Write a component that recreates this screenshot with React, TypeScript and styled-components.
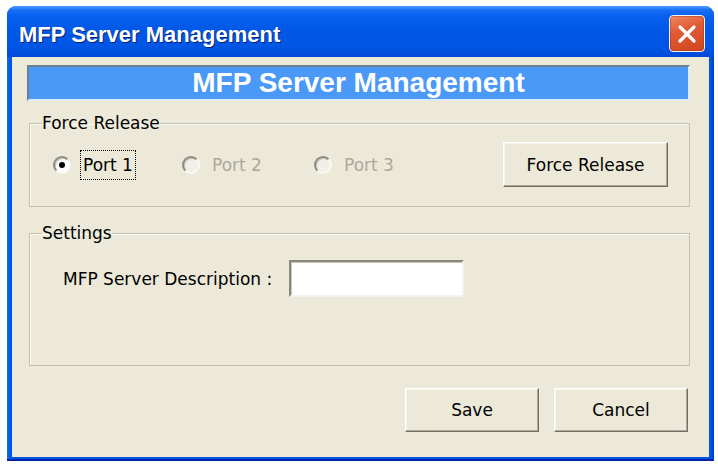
import React from "react";
import styled, { createGlobalStyle } from "styled-components";

const GlobalStyle = createGlobalStyle`
  html, body { margin: 0; padding: 0; background: #ffffff; }
  body { font-family: "DejaVu Sans", "Liberation Sans", sans-serif; }
  * { box-sizing: border-box; }
`;

const Window = styled.div`
  margin: 6px 0 0 7px;
  width: 707px;
  height: 455px;
  display: flex;
  flex-direction: column;
  border-radius: 9px 9px 0 0;
  overflow: hidden;
  background: linear-gradient(90deg, #1a6cf0 0px, #0055e5 3px, #0055e5 calc(100% - 3px), #0038c8 100%);
  box-shadow: inset 0 -2px 0 #0024a8;
`;

const TitleBar = styled.div`
  flex: none;
  height: 51px;
  display: flex;
  align-items: center;
  padding: 4px 9px 0 12px;
  background: linear-gradient(
    180deg,
    #4aa0ff 0px,
    #1a6ef5 4px,
    #0760ee 10px,
    #0058e6 24px,
    #0055e4 42px,
    #0049d8 51px
  );
`;

const TitleText = styled.div`
  flex: 1;
  margin-top: 3px;
  font-family: "Liberation Sans", Arial, sans-serif;
  font-weight: bold;
  font-size: 22px;
  color: #ffffff;
  text-shadow: 1px 1px 0 #0a2070;
  white-space: nowrap;
`;

const CloseButton = styled.div`
  width: 36px;
  height: 37px;
  border: 1px solid #f4f4f4;
  border-radius: 4px;
  background: linear-gradient(160deg, #ef8a66 0%, #e05a34 40%, #cf4520 100%);
  box-shadow: inset 0 0 0 1px rgba(150, 40, 10, 0.35);
  display: flex;
  align-items: center;
  justify-content: center;
`;

const Client = styled.div`
  flex: 1;
  margin: 0 5px 4px 5px;
  background: #ece9d8;
  padding: 8px 19px 0 15px;
  display: flex;
  flex-direction: column;
`;

const HeaderBar = styled.div`
  height: 36px;
  background: #4a99f7;
  border: 2px solid;
  border-color: #6f7f96 #dfe9f7 #dfe9f7 #6f7f96;
  display: flex;
  align-items: center;
  justify-content: center;
  font-family: "Liberation Sans", Arial, sans-serif;
  font-weight: bold;
  font-size: 28px;
  color: #ffffff;
  white-space: nowrap;
`;

const Group = styled.fieldset<{ $gap: number }>`
  margin: ${(p) => p.$gap}px 0 0 2px;
  padding: 0;
  min-width: 0;
  border: 1px solid #c3c0b0;
  box-shadow: inset 1px 1px 0 #fbfaf4;
`;

const Legend = styled.legend`
  margin-left: 12px;
  padding: 0;
  font-size: 17px;
  line-height: 20px;
  color: #000000;
`;

const ReleaseRow = styled.div`
  display: flex;
  align-items: center;
  padding: 9px 21px 19px 23px;
`;

const RadioItem = styled.div<{ $width?: number }>`
  display: flex;
  align-items: center;
  width: ${(p) => (p.$width ? `${p.$width}px` : "auto")};
  gap: 9px;
`;

const RadioCircle = styled.span<{ $checked?: boolean; $disabled?: boolean }>`
  flex: none;
  width: 18px;
  height: 18px;
  border-radius: 50%;
  border: 2px solid;
  border-color: #8d8b80 #f8f8f4 #f8f8f4 #8d8b80;
  box-shadow: inset 1px 1px 0 #c9c6b8;
  background: ${(p) => (p.$disabled ? "#f1f0e8" : "#ffffff")};
  display: flex;
  align-items: center;
  justify-content: center;
  &::after {
    content: "";
    display: ${(p) => (p.$checked ? "block" : "none")};
    width: 6px;
    height: 6px;
    border-radius: 50%;
    background: #000000;
  }
`;

const RadioLabel = styled.span<{ $disabled?: boolean; $focused?: boolean }>`
  font-size: 17px;
  line-height: 20px;
  padding: 4px 2px;
  border: 1px dotted ${(p) => (p.$focused ? "#000000" : "transparent")};
  color: ${(p) => (p.$disabled ? "#aca899" : "#000000")};
  white-space: nowrap;
`;

const Button = styled.button<{ $width: number; $height: number }>`
  width: ${(p) => p.$width}px;
  height: ${(p) => p.$height}px;
  padding: 0;
  background: #ece9d8;
  border: 1px solid;
  border-color: #ffffff #716f64 #716f64 #ffffff;
  box-shadow: inset -1px -1px 0 #aca899, inset 1px 1px 0 #f6f5ee;
  font-family: "DejaVu Sans", "Liberation Sans", sans-serif;
  font-size: 17px;
  color: #000000;
  border-radius: 0;
`;

const PushRight = styled.div`
  margin-left: auto;
`;

const SettingsRow = styled.div`
  display: flex;
  align-items: center;
  gap: 17px;
  padding: 17px 0 68px 33px;
`;

const FieldLabel = styled.span`
  font-size: 17px;
  color: #000000;
  white-space: nowrap;
`;

const TextInput = styled.input`
  width: 175px;
  height: 37px;
  border: 2px solid;
  border-color: #8a887d #f4f3ee #f4f3ee #8a887d;
  box-shadow: inset 1px 1px 0 #c9c7bb;
  background: #ffffff;
  outline: none;
  font-size: 17px;
`;

const ActionRow = styled.div`
  display: flex;
  justify-content: flex-end;
  gap: 15px;
  margin-top: 22px;
  padding-right: 2px;
`;

export default function App() {
  return (
    <>
      <GlobalStyle />
      <Window>
        <TitleBar>
          <TitleText>MFP Server Management</TitleText>
          <CloseButton>
            <svg width="22" height="22" viewBox="0 0 22 22">
              <path d="M4 4 L18 18 M18 4 L4 18" stroke="#ffffff" strokeWidth="3.2" strokeLinecap="round" />
            </svg>
          </CloseButton>
        </TitleBar>
        <Client>
          <HeaderBar>MFP Server Management</HeaderBar>
          <Group $gap={12}>
            <Legend>Force Release</Legend>
            <ReleaseRow>
              <RadioItem $width={129}>
                <RadioCircle $checked />
                <RadioLabel $focused>Port 1</RadioLabel>
              </RadioItem>
              <RadioItem $width={132}>
                <RadioCircle $disabled />
                <RadioLabel $disabled>Port 2</RadioLabel>
              </RadioItem>
              <RadioItem>
                <RadioCircle $disabled />
                <RadioLabel $disabled>Port 3</RadioLabel>
              </RadioItem>
              <PushRight>
                <Button $width={165} $height={45}>Force Release</Button>
              </PushRight>
            </ReleaseRow>
          </Group>
          <Group $gap={16}>
            <Legend>Settings</Legend>
            <SettingsRow>
              <FieldLabel>MFP Server Description :</FieldLabel>
              <TextInput type="text" />
            </SettingsRow>
          </Group>
          <ActionRow>
            <Button $width={134} $height={44}>Save</Button>
            <Button $width={134} $height={44}>Cancel</Button>
          </ActionRow>
        </Client>
      </Window>
    </>
  );
}
